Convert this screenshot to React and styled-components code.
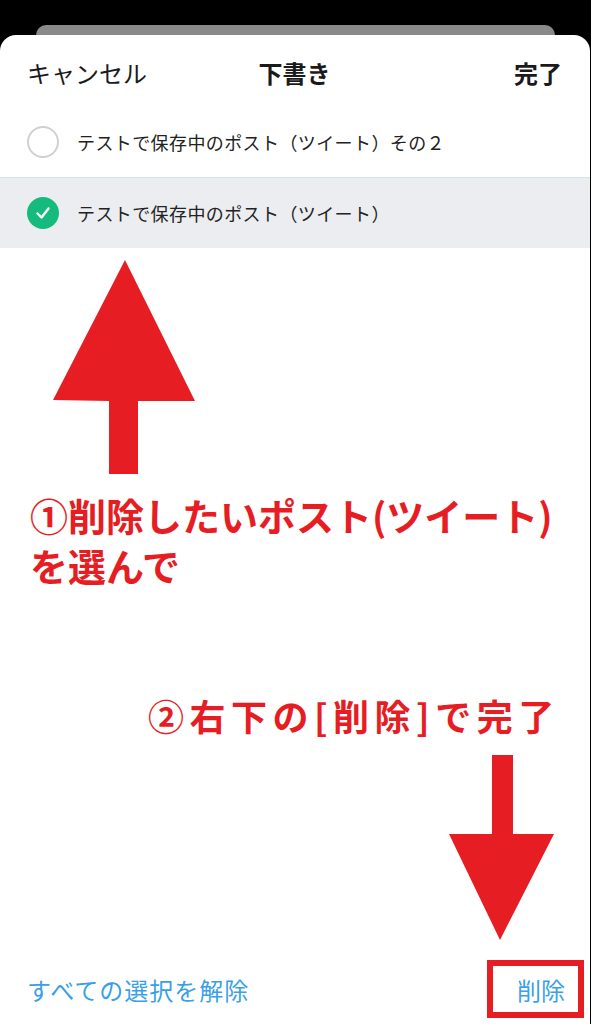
import React from 'react'
import styled, { createGlobalStyle } from 'styled-components'

const RED = '#e61e24'
const BLUE = '#3a9fe9'
const GREEN = '#15bb7d'

const GlobalStyle = createGlobalStyle`
  html, body {
    margin: 0;
    padding: 0;
    background: #000;
  }
  body {
    font-family: "Noto Sans CJK JP", "Noto Sans", sans-serif;
  }
`

const Screen = styled.div`
  width: 591px;
  height: 1024px;
  background: #000;
  padding-top: 25px;
  box-sizing: border-box;
  display: flex;
  flex-direction: column;
  overflow: hidden;
`

const BackCard = styled.div`
  height: 10px;
  margin: 0 36px;
  background: #8a8a8a;
  border-radius: 18px 18px 0 0;
`

const Sheet = styled.div`
  flex: 1;
  margin-right: 1px;
  background: #fff;
  border-radius: 16px 16px 0 0;
  display: flex;
  flex-direction: column;
`

const Header = styled.div`
  height: 71px;
  padding: 3px 28px 0 27px;
  box-sizing: border-box;
  display: grid;
  grid-template-columns: 1fr auto 1fr;
  align-items: center;
  color: #1a1a1a;
  font-size: 24px;
`

const Title = styled.div`
  font-weight: 700;
`

const HeaderAction = styled.div`
  justify-self: ${p => (p.$end ? 'end' : 'start')};
  font-weight: ${p => (p.$strong ? 600 : 400)};
`

const Row = styled.div`
  height: ${p => p.$h}px;
  box-sizing: border-box;
  display: flex;
  align-items: center;
  gap: 18px;
  padding-left: 27px;
  background: ${p => (p.$selected ? '#ecedf0' : '#fff')};
  border-bottom: ${p => (p.$divider ? '1px solid #d5e3eb' : 'none')};
  color: #222;
  font-size: 18px;
  letter-spacing: 0.4px;
`

const EmptyCircle = styled.div`
  width: 32px;
  height: 32px;
  box-sizing: border-box;
  border-radius: 50%;
  border: 2.5px solid #d0d0d0;
  flex-shrink: 0;
`

const CheckCircle = styled.div`
  width: 32px;
  height: 32px;
  border-radius: 50%;
  background: ${GREEN};
  display: flex;
  align-items: center;
  justify-content: center;
  flex-shrink: 0;
`

const Body = styled.div`
  flex: 1;
  display: flex;
  flex-direction: column;
`

const Arrow = styled.svg`
  display: block;
  margin-top: ${p => p.$top}px;
  margin-left: ${p => p.$left}px;
`

const Note = styled.div`
  color: ${RED};
  font-weight: 700;
  font-size: ${p => p.$size}px;
  line-height: 50px;
  height: 50px;
  letter-spacing: ${p => p.$spacing}px;
  margin-top: ${p => p.$top}px;
  padding-left: ${p => p.$left}px;
  white-space: nowrap;
`

const Footer = styled.div`
  margin-top: auto;
  height: 70px;
  padding: 0 6px 0 27px;
  display: flex;
  align-items: center;
  justify-content: space-between;
  color: ${BLUE};
  font-size: 24px;
`

const FooterLink = styled.div`
  letter-spacing: 1px;
`

const DeleteBox = styled.div`
  width: 97px;
  height: 58px;
  box-sizing: border-box;
  border: 6px solid ${RED};
  display: flex;
  align-items: center;
  justify-content: flex-end;
  padding-right: 13px;
`

const App = () => {
  return (
    <>
      <GlobalStyle />
      <Screen>
        <BackCard />
        <Sheet>
          <Header>
            <HeaderAction>キャンセル</HeaderAction>
            <Title>下書き</Title>
            <HeaderAction $end $strong>完了</HeaderAction>
          </Header>
          <Row $h={72} $divider>
            <EmptyCircle />
            <span>テストで保存中のポスト（ツイート）その２</span>
          </Row>
          <Row $h={70} $selected>
            <CheckCircle>
              <svg width="18" height="18" viewBox="0 0 18 18">
                <path d="M3.5 9.5 L7.5 13.5 L14.5 4.5" fill="none" stroke="#fff" strokeWidth="2.4" strokeLinecap="round" strokeLinejoin="round" />
              </svg>
            </CheckCircle>
            <span>テストで保存中のポスト（ツイート）</span>
          </Row>
          <Body>
            <Arrow $top={12} $left={53} width="143" height="214" viewBox="0 0 143 214">
              <polygon points="72,0 142,141 85,141 85,214 56,214 56,141 0,140" fill={RED} />
            </Arrow>
            <Note $size={38} $spacing={0} $top={16} $left={30}>
              ①削除したいポスト(ツイート)
            </Note>
            <Note $size={38} $spacing={0} $top={0} $left={30}>
              を選んで
            </Note>
            <Note $size={36} $spacing={5.5} $top={100} $left={148}>
              ②右下の[削除]で完了
            </Note>
            <Arrow $top={15} $left={449} width="106" height="185" viewBox="0 0 106 185">
              <polygon points="43,0 64,0 64,79 105,79 51,185 0,79 43,79" fill={RED} />
            </Arrow>
          </Body>
          <Footer>
            <FooterLink>すべての選択を解除</FooterLink>
            <DeleteBox>削除</DeleteBox>
          </Footer>
        </Sheet>
      </Screen>
    </>
  )
}

export default App
